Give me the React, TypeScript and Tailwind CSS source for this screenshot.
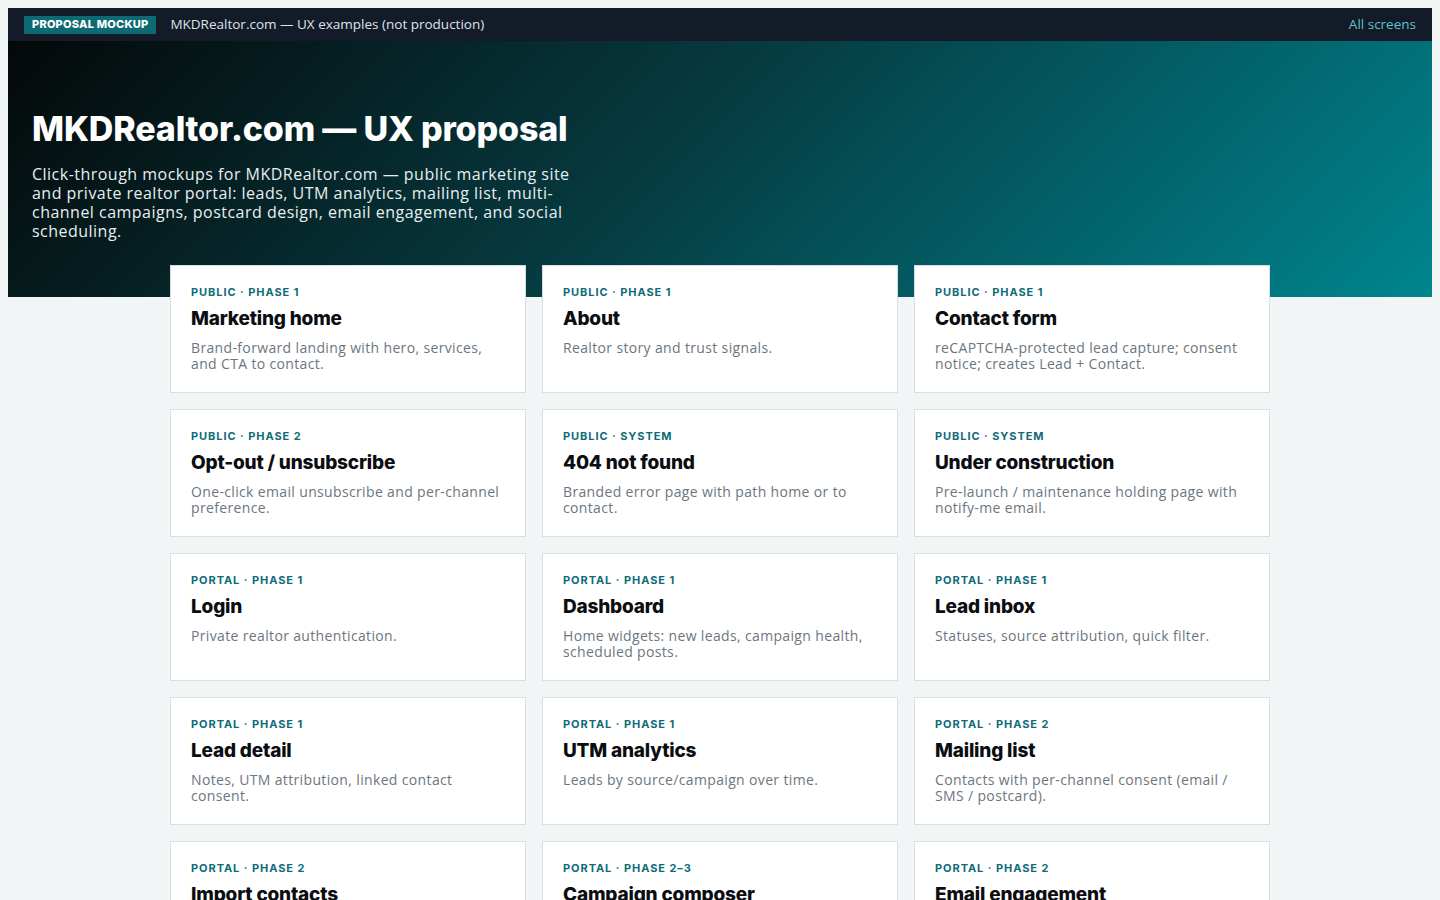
import React from 'react';

interface Screen {
  area: string;
  phase: string;
  title: string;
  blurb: string;
}

const screens: Screen[] = [
  { area: 'Public', phase: 'Phase 1', title: 'Marketing home', blurb: 'Brand-forward landing with hero, services, and CTA to contact.' },
  { area: 'Public', phase: 'Phase 1', title: 'About', blurb: 'Realtor story and trust signals.' },
  { area: 'Public', phase: 'Phase 1', title: 'Contact form', blurb: 'reCAPTCHA-protected lead capture; consent notice; creates Lead + Contact.' },
  { area: 'Public', phase: 'Phase 2', title: 'Opt-out / unsubscribe', blurb: 'One-click email unsubscribe and per-channel preference.' },
  { area: 'Public', phase: 'System', title: '404 not found', blurb: 'Branded error page with path home or to contact.' },
  { area: 'Public', phase: 'System', title: 'Under construction', blurb: 'Pre-launch / maintenance holding page with notify-me email.' },
  { area: 'Portal', phase: 'Phase 1', title: 'Login', blurb: 'Private realtor authentication.' },
  { area: 'Portal', phase: 'Phase 1', title: 'Dashboard', blurb: 'Home widgets: new leads, campaign health, scheduled posts.' },
  { area: 'Portal', phase: 'Phase 1', title: 'Lead inbox', blurb: 'Statuses, source attribution, quick filter.' },
  { area: 'Portal', phase: 'Phase 1', title: 'Lead detail', blurb: 'Notes, UTM attribution, linked contact consent.' },
  { area: 'Portal', phase: 'Phase 1', title: 'UTM analytics', blurb: 'Leads by source/campaign over time.' },
  { area: 'Portal', phase: 'Phase 2', title: 'Mailing list', blurb: 'Contacts with per-channel consent (email / SMS / postcard).' },
  { area: 'Portal', phase: 'Phase 2', title: 'Import contacts', blurb: 'CSV upload with column mapping and consent checks.' },
  { area: 'Portal', phase: 'Phase 2–3', title: 'Campaign composer', blurb: 'One campaign across email, SMS, postcard and social.' },
  { area: 'Portal', phase: 'Phase 2', title: 'Email engagement', blurb: 'Opens, clicks and bounces per send.' },
];

const heading = "font-['Inter',sans-serif]";
const body = "font-['Open_Sans',sans-serif]";

const ScreenCard: React.FC<{ screen: Screen }> = ({ screen }) => (
  <a
    href="#"
    className="block bg-white border border-[#d6e1e4] px-5 pt-[19px] pb-5"
  >
    <div className={`${heading} text-[11px] leading-[14px] font-bold uppercase tracking-[0.085em] text-[#0e6b78]`}>
      {screen.area} · {screen.phase}
    </div>
    <div className={`${heading} mt-2 text-[19px] leading-[24px] font-extrabold tracking-[-0.01em] text-[#0b0d10]`}>
      {screen.title}
    </div>
    <p className={`${body} mt-[9px] text-[14px] leading-[16px] tracking-[0.025em] text-[#6c7680]`}>
      {screen.blurb}
    </p>
  </a>
);

export default function App() {
  return (
    <div className="min-h-screen bg-[#f1f5f6] p-2">
      {/* top strip */}
      <div className="flex h-[33px] items-center bg-[#131a28] pl-4 pr-4">
        <span className={`${heading} bg-[#0d6a72] px-2 h-[18px] flex items-center text-[11px] font-extrabold uppercase tracking-[0.02em] text-white`}>
          Proposal mockup
        </span>
        <span className={`${body} ml-[14px] text-[13.5px] text-[#dfe3e8]`}>
          MKDRealtor.com — UX examples (not production)
        </span>
        <a href="#" className={`${body} ml-auto text-[13.5px] text-[#5ec3cd]`}>
          All screens
        </a>
      </div>

      {/* hero */}
      <div className="h-[256px] bg-[linear-gradient(135deg,#050808_0%,#063a40_45%,#00858f_100%)] px-6 pt-[67px]">
        <h1 className={`${heading} text-[34px] leading-[42px] font-extrabold tracking-[-0.005em] text-white`}>
          MKDRealtor.com — UX proposal
        </h1>
        <p className={`${body} mt-[15px] max-w-[545px] text-[16px] leading-[19px] tracking-[0.03em] text-[#e8eef0]`}>
          Click-through mockups for MKDRealtor.com — public marketing site and private realtor portal: leads, UTM analytics, mailing list, multi-channel campaigns, postcard design, email engagement, and social scheduling.
        </p>
      </div>

      {/* screen index */}
      <div className="mx-auto -mt-8 grid w-[1100px] grid-cols-3 gap-4 pb-10">
        {screens.map((s) => (
          <ScreenCard key={s.title} screen={s} />
        ))}
      </div>
    </div>
  );
}
